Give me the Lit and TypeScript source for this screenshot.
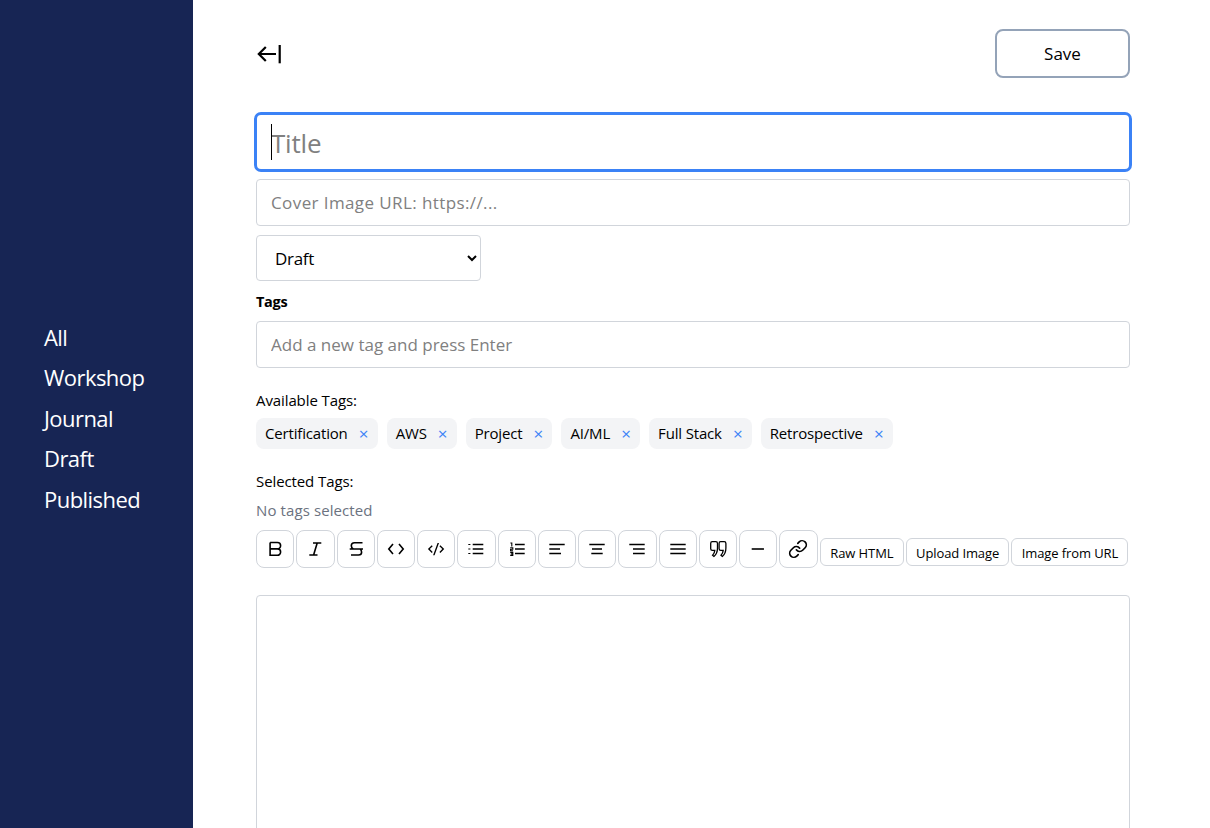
import { LitElement, html, css, svg } from "lit";
import { customElement } from "lit/decorators.js";

const tri = (a: [number, number], b: [number, number], c: [number, number]) =>
  svg`<path class="s" d="M${a[0]} 6.5H${a[1]}M${b[0]} 11H${b[1]}M${c[0]} 15.5H${c[1]}"/>`;
const q = "M5.2 3.7H8.8c1 0 1.7.7 1.7 1.7V10c0 3.7-1.3 6.6-3.6 8.4L5.6 17.2c1.3-1.2 2-2.9 2.2-4.8H5.4c-1 0-1.7-.7-1.7-1.7V5.4c0-1 .7-1.7 1.5-1.7z";

const ICONS: unknown[] = [
  svg`<path class="s" d="M6.1 4.5H13.4a3.2 3.2 0 0 1 0 6.4H6.1M6.1 4.5V17.3H13.4a3.2 3.2 0 0 0 0-6.4"/>`,
  svg`<path class="s" d="M9 5H17.3M5.3 17H13.5M13.2 5L9.6 17"/>`,
  svg`<path class="s" d="M17.5 4.7H9.5C7.5 4.7 6.3 6 6.3 7.8C6.3 9.4 7 10.3 8.3 11M4.7 11H18M15.2 11C16.1 12 16.6 13 16.6 14.3C16.6 16 15.3 17 13.5 17H6"/>`,
  svg`<path class="s" d="M8 6L3.8 11L8 16M14 6L18.2 11L14 16"/>`,
  svg`<g transform="translate(2.9 2.9) scale(.68)"><path fill="currentColor" d="M24 12L18.34 17.66L16.93 16.24L21.17 12L16.93 7.76L18.34 6.34L24 12ZM2.83 12L7.07 16.24L5.66 17.66L0 12L5.66 6.34L7.07 7.76L2.83 12ZM9.79 21H7.66L14.21 3H16.34L9.79 21Z"/></g>`,
  svg`<path class="s" d="M7.7 6.5H18.3M7.7 11H18.3M7.7 15.5H18.3"/><path class="d" d="M3.3 6.5H5.4M3.3 11H5.4M3.3 15.5H5.4"/>`,
  svg`<path class="s" d="M9 6.5H18.7M9 11H18.7M9 15.5H18.7"/><path class="d" d="M4.4 5H5.8V8.4M4.2 9.8H6.8V11.2H4.6V12.8H7M4.2 14.4H6.8V17.4H4.2M4.8 15.9H6.8"/>`,
  tri([3.3, 18.7], [3.3, 14], [3.3, 15]),
  tri([3.3, 18.7], [6, 16], [5.3, 16.7]),
  tri([3.3, 18.7], [7, 18.7], [7, 18.7]),
  tri([3.3, 18.7], [3.3, 18.7], [3.3, 18.7]),
  svg`<path class="q" d="${q}"/><path class="q" transform="translate(8.4 0)" d="${q}"/>`,
  svg`<path class="s" d="M4.7 11H17"/>`,
  svg`<g fill="none" stroke="currentColor" stroke-width="2" stroke-linecap="round" stroke-linejoin="round" transform="translate(1 1) scale(.8333)"><path d="M10 13a5 5 0 0 0 7.54.54l3-3a5 5 0 0 0-7.07-7.07l-1.72 1.71"/><path d="M14 11a5 5 0 0 0-7.54-.54l-3 3a5 5 0 0 0 7.07 7.07l1.71-1.71"/></g>`,
];

@customElement("app-root")
export class AppRoot extends LitElement {
  static styles = css`
    :host {
      display: flex;
      height: 100vh;
      overflow: hidden;
      font-family: "Open Sans", "Noto Sans", sans-serif;
      color: #000;
      background: #fff;
    }
    * { box-sizing: border-box; }
    .side {
      width: 193px;
      flex: none;
      background: #172554;
      display: flex;
      flex-direction: column;
      justify-content: center;
      padding: 8px 0 0 44px;
      color: #fff;
      font-size: 22px;
      line-height: 40.5px;
      letter-spacing: -0.55px;
    }
    .main {
      flex: 1;
      min-width: 0;
      padding: 29px 80px 0 63px;
      display: flex;
      flex-direction: column;
    }
    .main > * { flex: none; }
    .head {
      display: flex;
      justify-content: space-between;
      align-items: center;
      height: 49px;
      margin-bottom: 35px;
    }
    .back { width: 24px; height: 24px; color: #000; display: block; margin-left: 1px; }
    .save {
      width: 135px;
      height: 49px;
      border: 2px solid #94a3b8;
      border-radius: 8px;
      background: #fff;
      font: inherit;
      font-size: 17px;
      color: #000;
    }
    .title-wrap { position: relative; height: 58px; margin-bottom: 8px; }
    .caret {
      position: absolute;
      left: 15px;
      top: 11px;
      width: 1px;
      height: 36px;
      background: #000;
    }
    input {
      display: block;
      width: 100%;
      border: 1px solid #d1d5db;
      border-radius: 4px;
      padding: 0 14px;
      font: inherit;
      font-size: 17px;
      height: 47px;
      outline: none;
      background: #fff;
    }
    input::placeholder { color: #808080; opacity: 1; }
    input.title {
      height: 60px;
      margin: -1px -2px;
      width: calc(100% + 4px);
      border: 3px solid #3b82f6;
      border-radius: 7px;
      padding-top: 2px;
      font-size: 26px;
      letter-spacing: -0.2px;
    }
    input.cover { margin-bottom: 9px; letter-spacing: 0.4px; }
    select {
      display: block;
      width: 225px;
      height: 46px;
      border: 1px solid #d1d5db;
      border-radius: 4px;
      background: #fff;
      padding: 0 14px;
      font: inherit;
      font-size: 17px;
      letter-spacing: -0.3px;
      color: #000;
      margin-bottom: 11px;
    }
    .label-b {
      font-size: 14.5px;
      font-weight: 700;
      line-height: 20px;
      letter-spacing: -0.3px;
      margin-bottom: 9px;
    }
    .tagin { margin-bottom: 22px; }
    .lab {
      font-size: 15px;
      line-height: 20px;
      letter-spacing: -0.1px;
      margin-bottom: 8px;
    }
    .chips { display: flex; gap: 9px; margin-bottom: 22px; }
    .chip {
      height: 31px;
      background: #f3f4f6;
      border-radius: 8px;
      display: flex;
      align-items: center;
      padding: 0 7px 2px 9px;
      font-size: 15px;
      letter-spacing: -0.17px;
    }
    .chip b {
      font-weight: 400;
      color: #3b82f6;
      margin: 2px 0 0 9px;
      font-size: 17px;
      line-height: 17px;
      letter-spacing: 0;
      width: 14px;
      text-align: center;
    }
    .none {
      font-size: 15px;
      line-height: 20px;
      letter-spacing: 0.1px;
      color: #6b7280;
      margin: 1px 0 10px;
    }
    .bar { display: flex; align-items: flex-end; gap: 2px; margin-bottom: 27px; }
    .ib {
      width: 38.25px;
      height: 38px;
      flex: none;
      border: 1px solid #d1d5db;
      border-radius: 8px;
      background: #fff;
      display: flex;
      align-items: center;
      justify-content: center;
      padding: 0;
      color: #000;
    }
    .ib .s { fill: none; stroke: currentColor; stroke-width: 1.6; }
    .ib .q { fill: none; stroke: currentColor; stroke-width: 1.3; }
    .ib .d { fill: none; stroke: currentColor; stroke-width: 1.1; }
    .tb {
      height: 28px;
      margin-bottom: 2px;
      border: 1px solid #d1d5db;
      border-radius: 6px;
      background: #fff;
      padding: 1px 9.3px 0;
      font: inherit;
      font-size: 13px;
      letter-spacing: -0.1px;
      color: #000;
      white-space: nowrap;
    }
    .ib + .tb { margin-left: 0.5px; }
    .editor {
      height: 400px;
      border: 1px solid #d1d5db;
      border-radius: 4px;
    }
  `;

  render() {
    return html`
      <nav class="side">
        ${["All", "Workshop", "Journal", "Draft", "Published"].map((n) => html`<div>${n}</div>`)}
      </nav>
      <main class="main">
        <div class="head">
          <svg class="back" viewBox="0 0 24 24" fill="none" stroke="currentColor" stroke-width="2.2"><path d="M19 12H2.5M8.8 4.9L1.8 12L8.8 19.1"/><path d="M22.7 3V21.3"/></svg>
          <button class="save">Save</button>
        </div>
        <div class="title-wrap">
          <input class="title" placeholder="Title" />
          <span class="caret"></span>
        </div>
        <input class="cover" placeholder="Cover Image URL: https://..." />
        <select><option>Draft</option></select>
        <div class="label-b">Tags</div>
        <input class="tagin" placeholder="Add a new tag and press Enter" />
        <div class="lab">Available Tags:</div>
        <div class="chips">
          ${["Certification", "AWS", "Project", "AI/ML", "Full Stack", "Retrospective"].map(
            (t) => html`<span class="chip">${t}<b>×</b></span>`
          )}
        </div>
        <div class="lab">Selected Tags:</div>
        <div class="none">No tags selected</div>
        <div class="bar">
          ${ICONS.map(
            (p) => html`<button class="ib"><svg width="22" height="22" viewBox="0 0 22 22">${p}</svg></button>`
          )}
          <button class="tb">Raw HTML</button>
          <button class="tb">Upload Image</button>
          <button class="tb">Image from URL</button>
        </div>
        <div class="editor"></div>
      </main>
    `;
  }
}
